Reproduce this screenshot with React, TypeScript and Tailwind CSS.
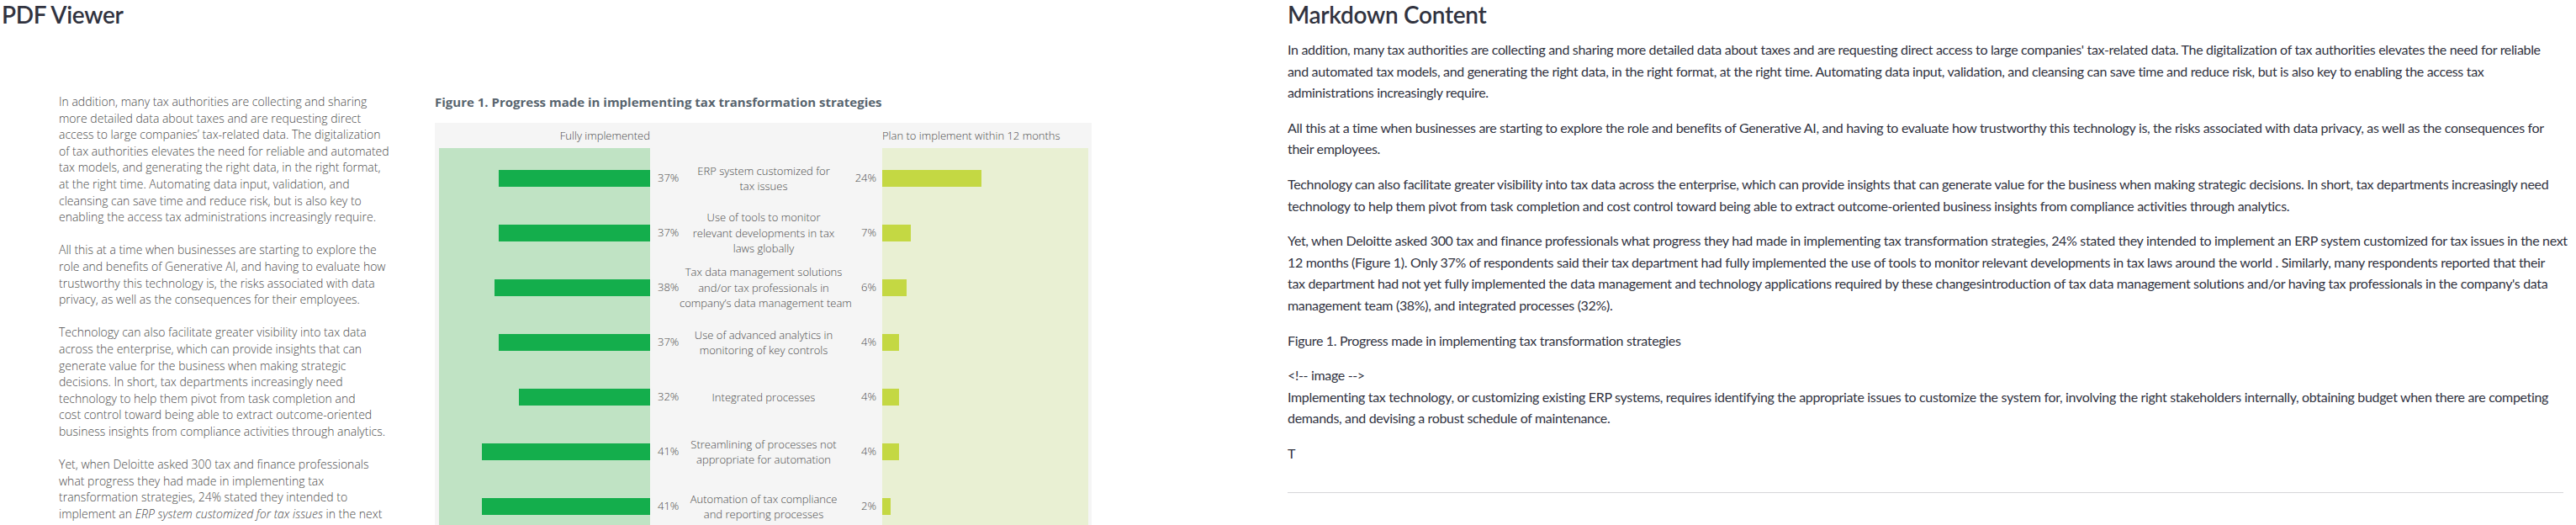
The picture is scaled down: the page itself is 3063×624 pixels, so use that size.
import React from 'react'

type Row = {
  done: number
  plan: number
  label: string[]
}

const rows: Row[] = [
  { done: 37, plan: 24, label: ['ERP system customized for', 'tax issues'] },
  { done: 37, plan: 7, label: ['Use of tools to monitor', 'relevant developments in tax', 'laws globally'] },
  { done: 38, plan: 6, label: ['Tax data management solutions', 'and/or tax professionals in', 'company’s data management team'] },
  { done: 37, plan: 4, label: ['Use of advanced analytics in', 'monitoring of key controls'] },
  { done: 32, plan: 4, label: ['Integrated processes'] },
  { done: 41, plan: 4, label: ['Streamlining of processes not', 'appropriate for automation'] },
  { done: 41, plan: 2, label: ['Automation of tax compliance', 'and reporting processes'] },
]

const pdfParas: React.ReactNode[][] = [
  [
    'In addition, many tax authorities are collecting and sharing',
    'more detailed data about taxes and are requesting direct',
    'access to large companies’ tax-related data. The digitalization',
    'of tax authorities elevates the need for reliable and automated',
    'tax models, and generating the right data, in the right format,',
    'at the right time. Automating data input, validation, and',
    'cleansing can save time and reduce risk, but is also key to',
    'enabling the access tax administrations increasingly require.',
  ],
  [
    'All this at a time when businesses are starting to explore the',
    'role and benefits of Generative AI, and having to evaluate how',
    'trustworthy this technology is, the risks associated with data',
    'privacy, as well as the consequences for their employees.',
  ],
  [
    'Technology can also facilitate greater visibility into tax data',
    'across the enterprise, which can provide insights that can',
    'generate value for the business when making strategic',
    'decisions. In short, tax departments increasingly need',
    'technology to help them pivot from task completion and',
    'cost control toward being able to extract outcome-oriented',
    'business insights from compliance activities through analytics.',
  ],
  [
    'Yet, when Deloitte asked 300 tax and finance professionals',
    'what progress they had made in implementing tax',
    'transformation strategies, 24% stated they intended to',
    <>
      implement an <i>ERP system customized for tax issues</i> in the next
    </>,
  ],
]

const mdParas: string[][] = [
  [
    "In addition, many tax authorities are collecting and sharing more detailed data about taxes and are requesting direct access to large companies' tax-related data. The digitalization of tax authorities elevates the need for reliable",
    'and automated tax models, and generating the right data, in the right format, at the right time. Automating data input, validation, and cleansing can save time and reduce risk, but is also key to enabling the access tax',
    'administrations increasingly require.',
  ],
  [
    'All this at a time when businesses are starting to explore the role and benefits of Generative AI, and having to evaluate how trustworthy this technology is, the risks associated with data privacy, as well as the consequences for',
    'their employees.',
  ],
  [
    'Technology can also facilitate greater visibility into tax data across the enterprise, which can provide insights that can generate value for the business when making strategic decisions. In short, tax departments increasingly need',
    'technology to help them pivot from task completion and cost control toward being able to extract outcome-oriented business insights from compliance activities through analytics.',
  ],
  [
    'Yet, when Deloitte asked 300 tax and finance professionals what progress they had made in implementing tax transformation strategies, 24% stated they intended to implement an ERP system customized for tax issues in the next',
    '12 months (Figure 1). Only 37% of respondents said their tax department had fully implemented the use of tools to monitor relevant developments in tax laws around the world . Similarly, many respondents reported that their',
    "tax department had not yet fully implemented the data management and technology applications required by these changesintroduction of tax data management solutions and/or having tax professionals in the company's data",
    'management team (38%), and integrated processes (32%).',
  ],
  ['Figure 1. Progress made in implementing tax transformation strategies'],
  [
    '<!-- image -->',
    'Implementing tax technology, or customizing existing ERP systems, requires identifying the appropriate issues to customize the system for, involving the right stakeholders internally, obtaining budget when there are competing',
    'demands, and devising a robust schedule of maintenance.',
  ],
  ['T'],
]

const ChartRow = ({ row }: { row: Row }) => (
  <div className="grid h-[65px] grid-cols-[251px_276px_245px]">
    <div className="flex items-center justify-end bg-[#c0e3c4]">
      <div className="h-[19.5px] bg-[#14ae4c]" style={{ width: row.done * 4.87 }} />
    </div>
    <div className="flex items-center">
      <span className="w-[35px] pl-[9px]">{row.done}%</span>
      <span className="w-[200px] text-center leading-[18.5px]">
        {row.label.map((l) => (
          <span key={l} className="block whitespace-nowrap">
            {l}
          </span>
        ))}
      </span>
      <span className="w-[34px] text-right">{row.plan}%</span>
    </div>
    <div className="flex items-center bg-[#e9f0d3]">
      <div className="h-[19.5px] bg-[#c4d843]" style={{ width: row.plan * 4.9 }} />
    </div>
  </div>
)

export default function App() {
  return (
    <div
      className="flex h-[624px] w-[3063px] gap-4 overflow-hidden bg-white text-[#31333f]"
      style={{ fontFamily: 'Lato, sans-serif' }}
    >
      {/* PDF column */}
      <div className="w-[1515px] shrink-0">
        <h3 className="h-[34px] pl-[2px] text-[28px] font-semibold leading-[34px] tracking-[-0.3px]">PDF Viewer</h3>

        <div className="mt-[77px] flex items-start font-['Open_Sans',sans-serif] text-[#4a4a4a]">
          <div className="ml-[70px] w-[420px] text-[14px] font-light leading-[19.6px]">
            {pdfParas.map((p, i) => (
              <p key={i} className="mb-[19.6px]">
                {p.map((line, j) => (
                  <span key={j} className="block whitespace-nowrap">
                    {line}
                  </span>
                ))}
              </p>
            ))}
          </div>

          {/* Figure */}
          <div className="ml-[27px] w-[781px]">
            <div className="mb-[15px] text-[15px] font-bold leading-[20px] text-[#57646e]">
              Figure 1. Progress made in implementing tax transformation strategies
            </div>
            <div className="bg-[#f5f5f5] pl-[5px] pr-[4px] text-[13px] font-light text-[#4a4a4a]">
              <div className="grid h-[30px] grid-cols-[251px_276px_245px] items-center pt-[2px]">
                <span className="text-right">Fully implemented</span>
                <span />
                <span>Plan to implement within 12 months</span>
              </div>
              <div className="grid h-[3.5px] grid-cols-[251px_276px_245px]">
                <div className="bg-[#c0e3c4]" />
                <div />
                <div className="bg-[#e9f0d3]" />
              </div>
              {rows.map((r, i) => (
                <ChartRow key={i} row={r} />
              ))}
            </div>
          </div>
        </div>
      </div>

      {/* Markdown column */}
      <div className="w-[1517px] shrink-0">
        <h3 className="h-[34px] text-[28px] font-semibold leading-[34px] tracking-[-0.3px]">Markdown Content</h3>
        <div className="mt-[12px] text-[16px] leading-[25.6px] tracking-[-0.33px]">
          {mdParas.map((p, i) => (
            <p key={i} className="mb-4">
              {p.map((line, j) => (
                <span key={j} className="block whitespace-nowrap">
                  {line}
                </span>
              ))}
            </p>
          ))}
          <hr className="mt-[33px] border-0 border-t border-[#d6d6d9]" />
        </div>
      </div>
    </div>
  )
}
